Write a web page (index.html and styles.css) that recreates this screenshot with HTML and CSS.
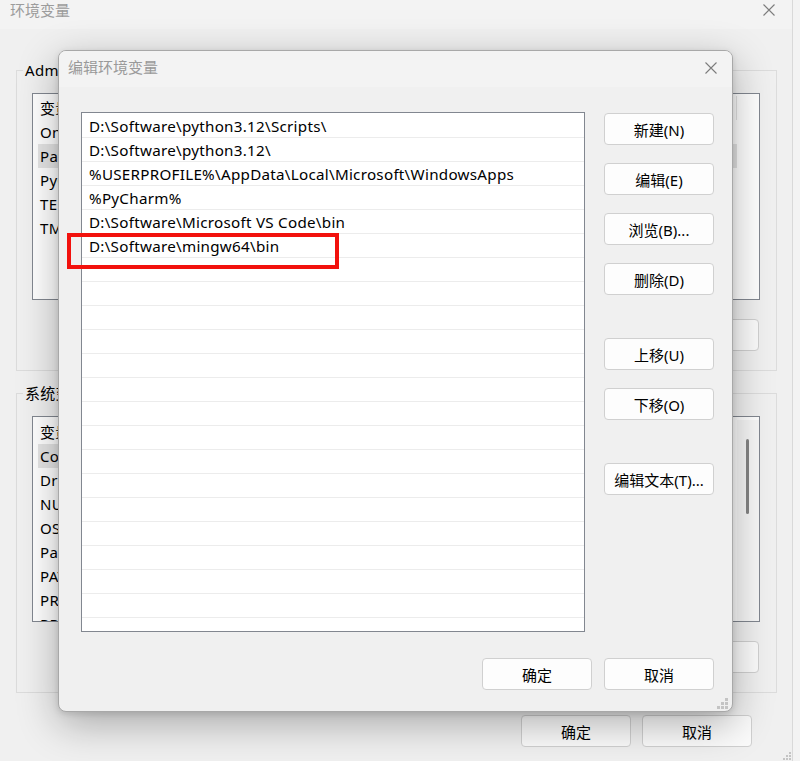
FILE: index.html
```html
<!DOCTYPE html>
<html lang="zh-CN">
<head>
<meta charset="utf-8">
<title>编辑环境变量</title>
<link rel="stylesheet" href="styles.css">
</head>
<body>
<div class="bgwin">
  <div class="bg-title">
    <span>环境变量</span>
    <svg class="xicon" width="12" height="12" viewBox="0 0 12 12"><path d="M0.5 0.5L11.5 11.5M11.5 0.5L0.5 11.5" stroke="#7c7c7c" stroke-width="1.1" fill="none"/></svg>
  </div>
  <div class="group g1">
    <div class="legend">Administrator 的用户变量</div>
    <div class="blist l1">
      <div class="rows">
        <div class="brow hdr">变量</div>
        <div class="brow">OneDrive</div>
        <div class="brow sel">Path</div>
        <div class="brow">PyCharm</div>
        <div class="brow">TEMP</div>
        <div class="brow">TMP</div>
      </div>
    </div>
    <div class="bbtns">
      <button class="bbtn">新建(N)...</button>
      <button class="bbtn">编辑(E)...</button>
      <button class="bbtn">删除(D)</button>
    </div>
  </div>
  <div class="group g2">
    <div class="legend">系统变量(S)</div>
    <div class="blist l2">
      <div class="rows">
        <div class="brow hdr">变量</div>
        <div class="brow sel">ComSpec</div>
        <div class="brow">DriverData</div>
        <div class="brow">NUMBER_OF_PROCESSORS</div>
        <div class="brow">OS</div>
        <div class="brow">Path</div>
        <div class="brow">PATHEXT</div>
        <div class="brow">PROCESSOR_ARCHITECTURE</div>
        <div class="brow">PROCESSOR_IDENTIFIER</div>
      </div>
      <div class="sbar"><div class="thumb"></div></div>
    </div>
    <div class="bbtns">
      <button class="bbtn">新建(W)...</button>
      <button class="bbtn">编辑(I)...</button>
      <button class="bbtn">删除(L)</button>
    </div>
  </div>
  <div class="bg-foot">
    <button class="bbtn">确定</button>
    <button class="bbtn">取消</button>
  </div>
</div>
<div class="strip"></div>
<svg class="grip bg-grip" width="10" height="10" viewBox="0 0 10 10"><g fill="#c4c4c4"><rect x="7" y="1" width="2" height="2"/><rect x="4" y="4" width="2" height="2"/><rect x="7" y="4" width="2" height="2"/><rect x="1" y="7" width="2" height="2"/><rect x="4" y="7" width="2" height="2"/><rect x="7" y="7" width="2" height="2"/></g></svg>

<div class="dlg">
  <div class="dlg-title">
    <span>编辑环境变量</span>
    <svg class="xicon" width="12" height="12" viewBox="0 0 12 12"><path d="M0.5 0.5L11.5 11.5M11.5 0.5L0.5 11.5" stroke="#7c7c7c" stroke-width="1.1" fill="none"/></svg>
  </div>
  <div class="dlg-main">
    <div class="plist">
      <div class="prow">D:\Software\python3.12\Scripts\</div>
      <div class="prow">D:\Software\python3.12\</div>
      <div class="prow">%USERPROFILE%\AppData\Local\Microsoft\WindowsApps</div>
      <div class="prow">%PyCharm%</div>
      <div class="prow">D:\Software\Microsoft VS Code\bin</div>
      <div class="prow">D:\Software\mingw64\bin</div>
      <div class="prow"></div><div class="prow"></div><div class="prow"></div><div class="prow"></div>
      <div class="prow"></div><div class="prow"></div><div class="prow"></div><div class="prow"></div>
      <div class="prow"></div><div class="prow"></div><div class="prow"></div><div class="prow"></div>
      <div class="prow"></div><div class="prow"></div><div class="prow"></div><div class="prow"></div>
    </div>
    <div class="btncol">
      <button class="btn">新建(N)</button>
      <button class="btn">编辑(E)</button>
      <button class="btn">浏览(B)...</button>
      <button class="btn">删除(D)</button>
      <button class="btn sp">上移(U)</button>
      <button class="btn">下移(O)</button>
      <button class="btn sp">编辑文本(T)...</button>
    </div>
  </div>
  <div class="dlg-foot">
    <button class="btn">确定</button>
    <button class="btn">取消</button>
  </div>
  <div class="mark"></div>
  <svg class="grip dlg-grip" width="12" height="12" viewBox="0 0 12 12"><g fill="#c4c4c4"><rect x="8" y="0" width="3" height="3"/><rect x="4" y="4" width="3" height="3"/><rect x="8" y="4" width="3" height="3"/><rect x="0" y="8" width="3" height="3"/><rect x="4" y="8" width="3" height="3"/><rect x="8" y="8" width="3" height="3"/></g></svg>
</div>
</body>
</html>
```
FILE: styles.css
```css
* { box-sizing: border-box; }
html, body { margin: 0; padding: 0; }
body {
  width: 800px;
  height: 761px;
  overflow: hidden;
  position: relative;
  display: flex;
  background: #f3f3f3;
  font-family: "Noto Sans", "Noto Sans CJK SC", sans-serif;
  font-size: 15px;
  color: #000;
}
button { font-family: inherit; font-size: 15px; color: #000; padding: 0; cursor: default; }

/* background window */
.bgwin {
  width: 793px;
  height: 761px;
  flex: none;
  background: #f0f0f0;
  border-right: 1px solid #d9d9d9;
  display: flex;
  flex-direction: column;
}
.bg-title {
  height: 29px;
  flex: none;
  background: #f3f3f3;
  display: flex;
  align-items: flex-start;
  justify-content: space-between;
  padding: 0 17px 0 10px;
  line-height: 20px;
  color: #9c9c9c;
}
.bg-title .xicon { margin-top: 4px; }
.group {
  margin: 0 15px 0 16px;
  border: 1px solid #dcdcdc;
  padding: 0 16px 19px 15px;
  display: flex;
  flex-direction: column;
  flex: none;
}
.g1 { margin-top: 41px; }
.g2 { margin-top: 22px; }
.legend {
  align-self: flex-start;
  margin: -11px 0 0 -9px;
  padding: 0 2px;
  line-height: 20px;
  height: 20px;
  background: #f0f0f0;
  white-space: nowrap;
  letter-spacing: 0.3px;
}
.blist {
  margin-top: 13px;
  border: 1px solid #828790;
  background: #fff;
  padding-top: 2px;
  overflow: hidden;
  display: flex;
}
.l1 { height: 207px; }
.l2 { height: 206px; padding-top: 3px; }
.rows { flex: 1; }
.brow {
  height: 24px;
  line-height: 24px;
  padding-left: 7px;
  margin-right: 22px;
  white-space: nowrap;
  letter-spacing: 0.3px;
}
.brow.hdr { border-right: 1px solid #e5e5e5; }
.brow.sel {
  background: #e5e5e5;
  margin-left: 5px;
  padding-left: 2px;
}
.sbar { width: 22px; flex: none; padding-top: 19px; background: #f7f7f7; }
.thumb { width: 3px; height: 75px; margin-left: 9px; background: #858585; border-radius: 2px; }
.bbtns {
  margin-top: 19px;
  display: flex;
  justify-content: flex-end;
  gap: 11px;
  padding-right: 1px;
}
.bbtn {
  width: 110px;
  height: 32px;
  border: 1px solid #d0d0d0;
  border-radius: 4px;
  background: #fbfbfb;
}
.bg-foot {
  margin-top: 22px;
  display: flex;
  justify-content: flex-end;
  gap: 11px;
  padding-right: 40px;
}
.strip { flex: 1; background: #f3f3f3; }
.grip { position: absolute; }
.bg-grip { right: 8px; bottom: 0; }

/* front dialog */
.dlg {
  position: absolute;
  left: 58px;
  top: 50px;
  width: 675px;
  height: 662px;
  background: #f0f0f0;
  border: 1px solid #a8a8a8;
  border-radius: 8px;
  box-shadow: 0 12px 40px rgba(0, 0, 0, 0.30), 0 2px 6px rgba(0, 0, 0, 0.12);
  display: flex;
  flex-direction: column;
  overflow: hidden;
}
.dlg-title {
  height: 36px;
  flex: none;
  background: #f3f3f3;
  display: flex;
  align-items: flex-start;
  justify-content: space-between;
  padding: 6px 15px 0 9px;
  line-height: 20px;
  color: #9a9a9a;
}
.dlg-title .xicon { margin-top: 5px; }
.dlg-main {
  margin-top: 25px;
  padding-left: 22px;
  display: flex;
  gap: 19px;
  flex: none;
}
.plist {
  width: 504px;
  height: 520px;
  border: 1px solid #828790;
  background: #fff;
  padding-top: 1px;
  overflow: hidden;
}
.prow {
  height: 24px;
  line-height: 23px;
  padding: 1px 0 0 7px;
  border-bottom: 1px solid #ececec;
  white-space: nowrap;
  font-size: 15.2px;
  letter-spacing: 0.27px;
}
.btncol {
  display: flex;
  flex-direction: column;
  gap: 18px;
  padding-top: 1px;
}
.btn {
  width: 110px;
  height: 32px;
  flex: none;
  border: 1px solid #d0d0d0;
  border-radius: 4px;
  background: #fdfdfd;
  display: flex;
  align-items: center;
  justify-content: center;
}
.btn.sp { margin-top: 25px; }
.dlg-foot {
  margin-top: 26px;
  display: flex;
  justify-content: flex-end;
  gap: 12px;
  padding-right: 18px;
}
.mark {
  position: absolute;
  left: 8px;
  top: 182px;
  width: 272px;
  height: 36px;
  border: 4px solid #f2110d;
}
.dlg-grip { right: 3px; bottom: 1px; }
```
